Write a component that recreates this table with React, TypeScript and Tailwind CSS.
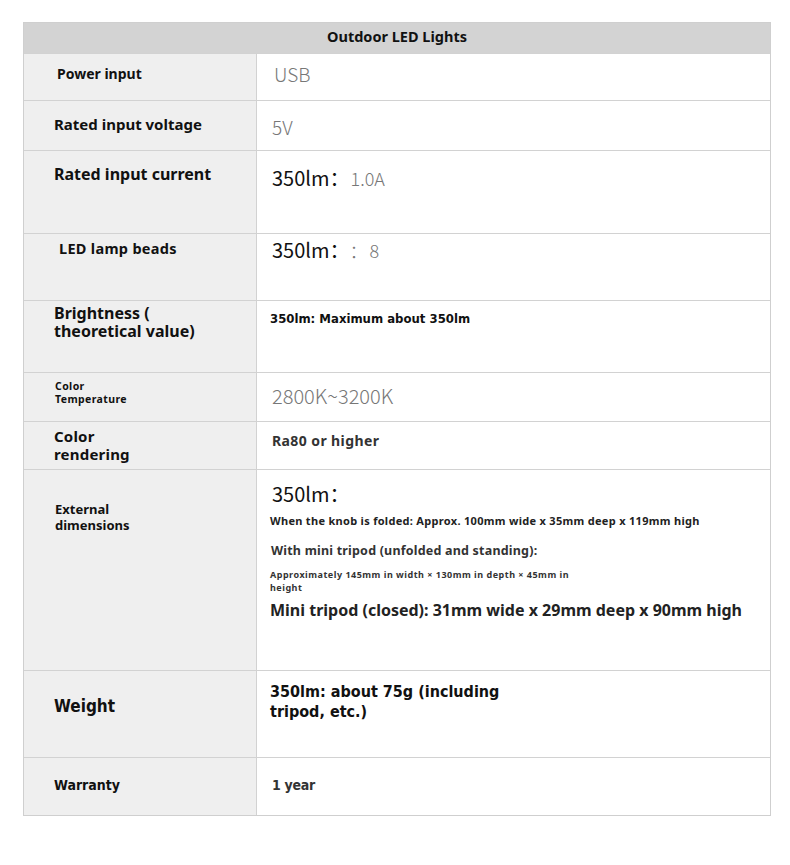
import type { ReactNode } from "react"

const sans = "font-['Noto_Sans','Open_Sans',sans-serif]"
const cjk = "font-['Noto_Sans_CJK_SC','Noto_Sans',sans-serif]"
const narrow = "font-['DejaVu_Sans_Condensed','Liberation_Sans_Narrow',sans-serif]"

type Row = {
  h: string
  labelClass: string
  label: ReactNode
  valueClass: string
  value: ReactNode
}

const rows: Row[] = [
  {
    h: "h-[47px]",
    labelClass: `pl-[33px] pt-[10px] text-[14px] leading-[20px] ${sans}`,
    label: "Power input",
    valueClass: `pl-[17px] pt-[7px] text-[19px] leading-[26px] font-light text-[#777] ${cjk}`,
    value: "USB",
  },
  {
    h: "h-[50px]",
    labelClass: `pl-[30px] pt-[13px] text-[15px] leading-[20px] ${sans}`,
    label: "Rated input voltage",
    valueClass: `pl-[15px] pt-[13px] text-[19px] leading-[26px] font-light text-[#777] ${cjk}`,
    value: "5V",
  },
  {
    h: "h-[83px]",
    labelClass: `pl-[30px] pt-[12px] text-[16px] leading-[22px] ${sans}`,
    label: "Rated input current",
    valueClass: `pl-[15px] pt-[13px] text-[20px] leading-[28px] font-normal ${cjk}`,
    value: (
      <>
        <span className="text-[#111]">350lm：</span>
        <span className="ml-[1px] text-[18px] font-light text-[#777]">1.0A</span>
      </>
    ),
  },
  {
    h: "h-[67px]",
    labelClass: `pl-[35px] pt-[4px] text-[14.5px] leading-[20px] tracking-[0.3px] ${sans}`,
    label: "LED lamp beads",
    valueClass: `pl-[15px] pt-[2px] text-[20px] leading-[28px] font-normal ${cjk}`,
    value: (
      <>
        <span className="text-[#111]">350lm：</span>
        <span className="ml-[10px] text-[18px] font-light text-[#777]">：</span>
        <span className="ml-[2px] text-[18px] font-light text-[#777]">8</span>
      </>
    ),
  },
  {
    h: "h-[72px]",
    labelClass: `pl-[30px] pt-[3px] text-[16px] leading-[18px] ${sans}`,
    label: (
      <>
        Brightness (<br />
        theoretical value)
      </>
    ),
    valueClass: `pl-[13px] pt-[9px] text-[13px] leading-[18px] ${narrow}`,
    value: "350lm: Maximum about 350lm",
  },
  {
    h: "h-[49px]",
    labelClass: `pl-[31px] pt-[7px] text-[10.5px] leading-[13px] tracking-[0.4px] ${sans}`,
    label: (
      <>
        Color
        <br />
        Temperature
      </>
    ),
    valueClass: `pl-[15px] pt-[9px] text-[20px] leading-[28px] font-light text-[#777] ${cjk}`,
    value: "2800K~3200K",
  },
  {
    h: "h-[48px]",
    labelClass: `pl-[30px] pt-[5px] text-[15px] leading-[18px] tracking-[0.2px] ${sans}`,
    label: (
      <>
        Color
        <br />
        rendering
      </>
    ),
    valueClass: `pl-[15px] pt-[9px] text-[14px] leading-[20px] text-[#333] tracking-[0.4px] ${sans}`,
    value: "Ra80 or higher",
  },
  {
    h: "h-[201px]",
    labelClass: `pl-[31px] pt-[31px] text-[13px] leading-[16px] ${sans}`,
    label: (
      <>
        External
        <br />
        dimensions
      </>
    ),
    valueClass: `pl-[13px] pt-[10px] ${sans}`,
    value: (
      <div className="flex flex-col">
        <div className={`pl-[2px] text-[20px] leading-[28px] font-normal text-[#111] ${cjk}`}>350lm：</div>
        <div className="mt-[5px] text-[11px] leading-[16px] text-[#222] tracking-[0.3px]">
          When the knob is folded: Approx. 100mm wide x 35mm deep x 119mm high
        </div>
        <div className="mt-[13px] pl-[1px] text-[12.5px] leading-[18px] text-[#333] tracking-[0.2px]">
          With mini tripod (unfolded and standing):
        </div>
        <div className="mt-[8px] w-[305px] text-[9px] leading-[13px] text-[#333] tracking-[0.5px]">
          Approximately 145mm in width × 130mm in depth × 45mm in height
        </div>
        <div className="mt-[5px] text-[16px] leading-[22px] text-[#222]">
          Mini tripod (closed): 31mm wide x 29mm deep x 90mm high
        </div>
      </div>
    ),
  },
  {
    h: "h-[87px]",
    labelClass: `pl-[30px] pt-[24px] text-[17px] leading-[22px] ${narrow}`,
    label: "Weight",
    valueClass: `pl-[13px] pt-[11px] text-[16px] leading-[20px] ${narrow}`,
    value: (
      <>
        350lm: about 75g (including
        <br />
        tripod, etc.)
      </>
    ),
  },
  {
    h: "h-[58px]",
    labelClass: `pl-[30px] pt-[17px] text-[14px] leading-[20px] ${narrow}`,
    label: "Warranty",
    valueClass: `pl-[15px] pt-[17px] text-[14px] leading-[20px] text-[#333] tracking-[-0.3px] ${narrow}`,
    value: "1 year",
  },
]

export default function App() {
  return (
    <div className="min-h-screen bg-white pt-[22px] pl-[23px]">
      <div className="w-[748px] border border-[#cfcfcf] bg-white text-[#111]">
        <div
          className={`flex h-[30px] justify-center bg-[#d3d3d3] pt-[3px] text-[14.5px] leading-[20px] font-bold ${sans}`}
        >
          Outdoor LED Lights
        </div>
        {rows.map((r, i) => (
          <div key={i} className={`flex ${r.h} border-t border-[#d2d2d2]`}>
            <div className={`w-[233px] shrink-0 border-r border-[#d2d2d2] bg-[#efefef] font-bold ${r.labelClass}`}>
              {r.label}
            </div>
            <div className={`flex-1 font-bold ${r.valueClass}`}>{r.value}</div>
          </div>
        ))}
      </div>
    </div>
  )
}
